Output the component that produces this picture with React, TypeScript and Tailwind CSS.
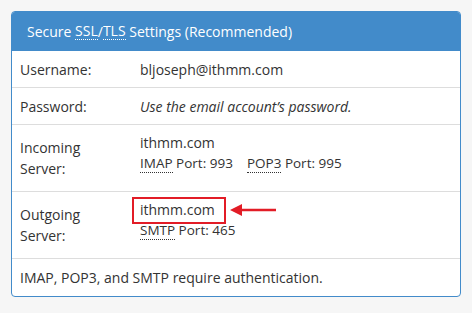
import React from "react";

function Abbr({ children }: { children: React.ReactNode }) {
  return <span className="border-b border-dotted border-[#333]">{children}</span>;
}

function Row({
  label,
  children,
  height,
  last,
}: {
  label: React.ReactNode;
  children: React.ReactNode;
  height: string;
  last?: boolean;
}) {
  return (
    <div className={`flex ${height} ${last ? "" : "border-b border-[#ddd]"}`}>
      <div className="w-[128px] shrink-0 pl-2 flex items-center leading-[21px]">{label}</div>
      <div className="flex-1 relative">{children}</div>
    </div>
  );
}

export default function App() {
  return (
    <div
      className="min-h-[313px] bg-[#f6f6f6] p-[11px] text-[14px] text-[#333]"
      style={{ fontFamily: '"Open Sans", "Liberation Sans", sans-serif' }}
    >
      <div className="w-[450px] border border-[#428bca] rounded bg-white overflow-hidden">
        <div className="h-[39px] bg-[#428bca] text-white flex items-center pl-[15px]">
          Secure&nbsp;<span className="border-b border-dotted border-white leading-[16px]">SSL</span>/
          <span className="border-b border-dotted border-white leading-[16px]">TLS</span>&nbsp;Settings (Recommended)
        </div>

        <Row label="Username:" height="h-[37px]">
          <div className="h-full flex items-center">bljoseph@ithmm.com</div>
        </Row>
        <Row label="Password:" height="h-[37px]">
          <div className="h-full flex items-center italic">Use the email account’s password.</div>
        </Row>
        <Row
          label={
            <span>
              Incoming
              <br />
              Server:
            </span>
          }
          height="h-[67px]"
        >
          <div className="pt-[8px] leading-[20px]">
            <div>ithmm.com</div>
            <div className="text-[13.5px]">
              <Abbr>IMAP</Abbr> Port: 993&nbsp;&nbsp;&nbsp;&nbsp;<Abbr>POP3</Abbr> Port: 995
            </div>
          </div>
        </Row>
        <Row
          label={
            <span>
              Outgoing
              <br />
              Server:
            </span>
          }
          height="h-[67px]"
        >
          <div className="pt-[8px] leading-[20px]">
            <div>ithmm.com</div>
            <div className="text-[13.5px]">
              <Abbr>SMTP</Abbr> Port: 465
            </div>
          </div>
          {/* annotation */}
          <div className="absolute left-[-8px] top-[5px] w-[94px] h-[27px] border-2 border-[#e21c26]" />
          <svg className="absolute left-[88px] top-[11px]" width="52" height="14" viewBox="0 0 52 14">
            <polygon points="2,7 14,1 14,13" fill="#e21c26" />
            <line x1="12" y1="7" x2="48" y2="7" stroke="#e21c26" strokeWidth="2.5" />
          </svg>
        </Row>
        <div className="h-[37px] pl-2 flex items-center">IMAP, POP3, and SMTP require authentication.</div>
      </div>
    </div>
  );
}
